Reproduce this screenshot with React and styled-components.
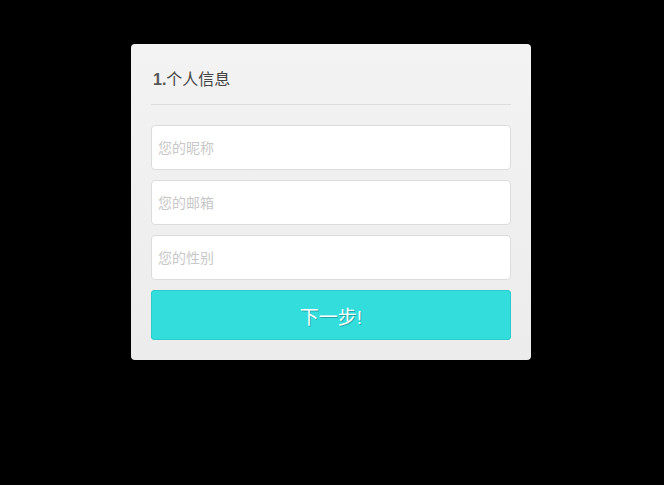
import React from "react";
import styled, { createGlobalStyle } from "styled-components";

const Global = createGlobalStyle`
  html, body { margin: 0; padding: 0; background: #000; }
  body { font-family: "Liberation Sans", "Noto Sans CJK SC", sans-serif; }
`;

const Page = styled.div`
  width: 664px;
  height: 485px;
  background: #000;
  padding-top: 44px;
  box-sizing: border-box;
`;

const Card = styled.form`
  width: 400px;
  margin-left: 131px;
  box-sizing: border-box;
  padding: 20px;
  border-radius: 4px;
  background: linear-gradient(to bottom, #f3f3f3, #ececec);
  display: flex;
  flex-direction: column;
`;

const Header = styled.h2`
  margin: 0 0 20px;
  padding: 1px 0 10px 2px;
  height: 29px;
  line-height: 30px;
  font-size: 16px;
  font-weight: normal;
  color: #444;
  border-bottom: 1px solid #dcdcdc;
  b { font-weight: bold; color: #555; }
`;

const Field = styled.input`
  height: 45px;
  box-sizing: border-box;
  margin: 0 0 10px;
  padding: 0 6px;
  border: 1px solid #dcdcdc;
  border-radius: 4px;
  background: #fff;
  font-family: "Liberation Sans", "Noto Sans CJK SC", sans-serif;
  font-size: 14px;
  color: #555;
  outline: none;
  &::placeholder { color: #c8c8c8; }
`;

const Next = styled.button`
  height: 50px;
  box-sizing: border-box;
  border: 1px solid #2ccaca;
  border-radius: 3px;
  background: #33dddb;
  color: #fff;
  font-family: "Liberation Sans", "Noto Sans CJK SC", sans-serif;
  font-size: 19px;
  text-shadow: 1px 1px 0 rgba(0, 0, 0, 0.25);
  cursor: pointer;
`;

export default function App() {
  return (
    <Page>
      <Global />
      <Card onSubmit={(e) => e.preventDefault()}>
        <Header><b>1.</b>个人信息</Header>
        <Field placeholder="您的昵称" />
        <Field placeholder="您的邮箱" />
        <Field placeholder="您的性别" />
        <Next type="submit">下一步!</Next>
      </Card>
    </Page>
  );
}
